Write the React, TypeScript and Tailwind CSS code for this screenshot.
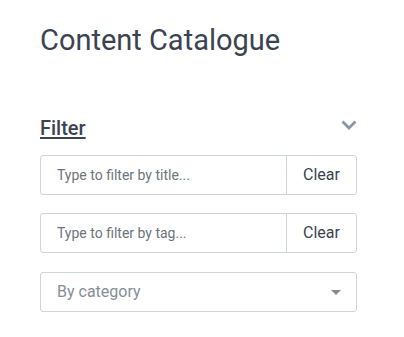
import React, { useState } from 'react';

const FilterInput: React.FC<{ placeholder: string }> = ({ placeholder }) => {
  const [value, setValue] = useState('');
  return (
    <div className="flex h-10 rounded-[3px] border border-[#ced4da] bg-white">
      <input
        className="min-w-0 flex-1 bg-transparent pl-4 text-[14px] text-[#495057] outline-none placeholder:text-[#6c757d]"
        placeholder={placeholder}
        value={value}
        onChange={(e) => setValue(e.target.value)}
      />
      <button
        className="w-[70px] border-l border-[#ced4da] text-[16px] text-[#3b4351]"
        onClick={() => setValue('')}
      >
        Clear
      </button>
    </div>
  );
};

const App: React.FC = () => {
  return (
    <div className="min-h-screen bg-white pl-10 pr-[47px] pt-[22px] font-['Roboto',sans-serif] text-[#3b4351]">
      <h1 className="text-[29px] leading-[36px]">Content Catalogue</h1>

      {/* Filter section */}
      <div className="mt-[57px] flex items-center justify-between">
        <span className="text-[20px] font-medium leading-[26px] underline underline-offset-2">Filter</span>
        <svg width="16" height="10" viewBox="0 0 16 10" className="-mt-[7px]">
          <path d="M1.5 1.5 L8 8 L14.5 1.5" fill="none" stroke="#8c95a5" strokeWidth="2.8" />
        </svg>
      </div>

      <div className="mt-[14px] flex flex-col gap-[18px]">
        <FilterInput placeholder="Type to filter by title..." />
        <FilterInput placeholder="Type to filter by tag..." />
      </div>

      <div className="mt-[19px] flex h-10 items-center justify-between rounded-[3px] border border-[#ced4da] pl-4 pr-[15px]">
        <span className="text-[16px] text-[#868e96]">By category</span>
        <svg width="10" height="5" viewBox="0 0 10 5">
          <path d="M0 0 L10 0 L5 5 Z" fill="#8c8c8c" />
        </svg>
      </div>
    </div>
  );
};

export default App;
